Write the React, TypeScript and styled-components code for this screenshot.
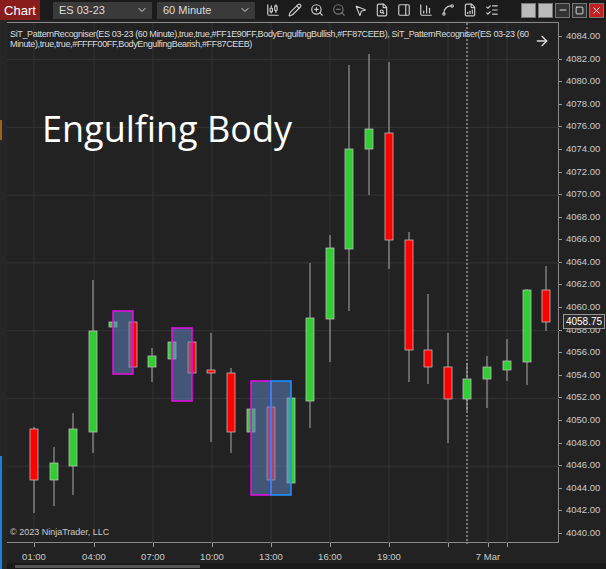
import React from "react";
import styled, { createGlobalStyle } from "styled-components";
import { CandlestickChart, Pencil, ZoomIn, ZoomOut, MousePointer2, FileSearch, PanelRight, BarChart3, Spline, FileBarChart, ListChecks, ChevronDown, Minus, Square, X, ArrowRight } from "lucide-react";

const Global = createGlobalStyle`
  html,body{margin:0;padding:0;background:#222;overflow:hidden;}
  body{font-family:"Liberation Sans",Arial,sans-serif;}
`;

const Page = styled.div`width:606px;height:569px;display:flex;flex-direction:column;background:#222;`;
const Toolbar = styled.div`height:20px;display:flex;align-items:center;background:#1b1b1b;gap:0;`;
const Tab = styled.div`width:40px;height:20px;background:#8a1c1c;color:#fff;font-size:13px;display:flex;align-items:center;justify-content:center;`;
const Select = styled.div<{ $w: number; $ml: number }>`
  width:${p => p.$w}px;margin-left:${p => p.$ml}px;height:17px;background:#3a3a3a;color:#ddd;font-size:11px;
  display:flex;align-items:center;justify-content:space-between;padding:0 4px 0 6px;box-sizing:border-box;`;
const Icons = styled.div`display:flex;gap:8px;margin-left:11px;color:#ccc;align-items:center;`;
const WinBtns = styled.div`display:flex;gap:2px;margin-left:auto;margin-right:2px;`;
const WinBtn = styled.div<{ $bg: string }>`width:13px;height:13px;background:${p => p.$bg};border:1px solid #777;display:flex;align-items:center;justify-content:center;color:#fff;`;
const Main = styled.div`flex:1;display:flex;`;
const LeftStrip = styled.div`width:7px;position:relative;background:#262626;`;
const Mark = styled.div<{ $top: number; $h: number; $c: string }>`position:absolute;left:0;width:2px;top:${p => p.$top}px;height:${p => p.$h}px;background:${p => p.$c};`;
const Chart = styled.div`flex:1;display:flex;flex-direction:column;padding-top:2px;`;
const Panel = styled.div`height:521px;display:flex;`;
const Plot = styled.div`width:552px;position:relative;border:1px solid #8a8a8a;border-left:none;box-sizing:border-box;`;
const Axis = styled.div`flex:1;position:relative;`;
const AxisLabel = styled.div<{ $y: number }>`position:absolute;left:7px;top:${p => p.$y - 6}px;font-size:9.5px;color:#ccc;`;
const Tick = styled.div<{ $y: number }>`position:absolute;left:0;width:3px;top:${p => p.$y}px;height:1px;background:#999;`;
const PriceTag = styled.div`position:absolute;left:4px;top:292px;width:42px;height:15px;background:#2a2a2a;border:1px solid #999;color:#fff;font-size:10px;display:flex;align-items:center;justify-content:center;box-sizing:border-box;`;
const Header = styled.div`position:absolute;left:3px;top:6px;width:530px;font-size:9px;letter-spacing:-0.35px;line-height:10px;color:#ddd;`;
const Title = styled.div`position:absolute;left:35px;top:81px;font-family:"Open Sans",sans-serif;font-size:36px;color:#fff;`;
const Copy = styled.div`position:absolute;left:3px;bottom:5px;font-size:9px;color:#ccc;`;
const Arrow = styled.div`position:absolute;right:8px;top:10px;color:#ddd;`;
const TimeAxis = styled.div`height:20px;position:relative;`;
const TimeLabel = styled.div<{ $x: number }>`position:absolute;top:8px;left:${p => p.$x - 7 - 15}px;width:30px;text-align:center;font-size:9.5px;color:#ccc;`;
const TimeTick = styled.div<{ $x: number }>`position:absolute;top:0;left:${p => p.$x - 7}px;width:1px;height:4px;background:#999;`;
const Scroll = styled.div`height:6px;background:#1a1a1a;position:relative;`;
const Thumb = styled.div`position:absolute;left:8px;width:185px;height:3px;top:2px;background:#555;`;

type C = [number, number, number, number, number, boolean];
const candles: C[] = [
  [34, 428, 479, 426, 512, false], [54, 462, 479, 446, 505, true], [73, 428, 465, 412, 494, true],
  [93, 330, 431, 279, 452, true], [113, 321, 326, 321, 326, true], [133, 321, 366, 321, 366, false],
  [152, 355, 366, 347, 381, true], [172, 341, 358, 341, 358, true], [192, 341, 372, 341, 372, false],
  [211, 369, 372, 332, 441, false], [231, 372, 431, 367, 452, false], [251, 408, 431, 408, 431, true],
  [271, 406, 479, 406, 479, false], [291, 397, 482, 397, 482, true], [310, 317, 400, 262, 427, true],
  [330, 247, 318, 234, 361, true], [349, 148, 248, 64, 310, true], [369, 128, 148, 53, 194, true],
  [389, 132, 239, 61, 268, false], [409, 239, 349, 231, 381, false], [428, 349, 366, 293, 383, false],
  [448, 366, 398, 332, 442, false], [467, 378, 398, 362, 410, true], [487, 366, 378, 355, 407, true],
  [507, 360, 369, 338, 380, true], [527, 289, 361, 288, 384, true], [546, 289, 321, 265, 330, false],
];
const prices = Array.from({ length: 23 }, (_, i) => 4084 - i * 2);
const py = (p: number) => 36 + (4084 - p) * 11.295;
const times: [number, string][] = [[34, "01:00"], [94, "04:00"], [153, "07:00"], [212, "10:00"], [271, "13:00"], [330, "16:00"], [389, "19:00"], [488, "7 Mar"]];
const ticksX = [34, 94, 153, 212, 271, 330, 389, 448, 488, 507];
const boxes = [[113, 310, 133, 373, "#e010e0"], [172, 327, 192, 400, "#e010e0"], [251, 380, 271, 494, "#e010e0"], [271, 380, 291, 494, "#1e90ff"]] as const;

export default function App() {
  return (
    <Page>
      <Global />
      <Toolbar>
        <Tab>Chart</Tab>
        <Select $w={99} $ml={13}>ES 03-23<ChevronDown size={12} /></Select>
        <Select $w={98} $ml={5}>60 Minute<ChevronDown size={12} /></Select>
        <Icons>
          <CandlestickChart size={14} /><Pencil size={14} /><ZoomIn size={14} /><ZoomOut size={14} color="#777" />
          <MousePointer2 size={13} /><FileSearch size={14} /><PanelRight size={14} /><BarChart3 size={14} />
          <Spline size={14} /><FileBarChart size={14} /><ListChecks size={14} />
        </Icons>
        <WinBtns>
          <WinBtn $bg="#bbb" /><WinBtn $bg="#bbb" />
          <WinBtn $bg="#333"><Minus size={10} /></WinBtn><WinBtn $bg="#333"><Square size={9} /></WinBtn>
          <WinBtn $bg="#c02020"><X size={11} /></WinBtn>
        </WinBtns>
      </Toolbar>
      <Main>
        <LeftStrip>
          <Mark $top={100} $h={20} $c="#a06020" />
          <Mark $top={436} $h={113} $c="#1e7fe0" />
        </LeftStrip>
        <Chart>
          <Panel>
            <Plot>
              <svg width="552" height="521" viewBox="7 22 552 521" style={{ display: "block" }}>
                {[4082, 4076, 4070, 4064, 4058, 4052, 4046].map(p => (
                  <line key={p} x1={7} x2={559} y1={py(p)} y2={py(p)} stroke="#333" />
                ))}
                {ticksX.map(x => <line key={x} x1={x} x2={x} y1={22} y2={543} stroke="#333" />)}
                <line x1={467} x2={467} y1={22} y2={543} stroke="#ccc" strokeDasharray="2 2" />
                {candles.map(([x, t, b, h, l, up], i) => (
                  <g key={i}>
                    <line x1={x} x2={x} y1={h} y2={l} stroke="#aaa" />
                    <rect x={x - 4} y={t} width={8} height={Math.max(b - t, 2)} fill={up ? "#32cd32" : "#ff0000"} stroke="#bbb" strokeWidth={0.8} />
                  </g>
                ))}
                {boxes.map(([x1, y1, x2, y2, c], i) => (
                  <rect key={i} x={x1} y={y1} width={x2 - x1} height={y2 - y1} fill="rgba(95,130,190,0.55)" stroke={c} strokeWidth={1.6} />
                ))}
              </svg>
              <Header>SiT_PatternRecogniser(ES 03-23 (60 Minute),true,true,#FF1E90FF,BodyEngulfingBullish,#FF87CEEB), SiT_PatternRecogniser(ES 03-23 (60 Minute),true,true,#FFFF00FF,BodyEngulfingBearish,#FF87CEEB)</Header>
              <Arrow><ArrowRight size={16} /></Arrow>
              <Title>Engulfing Body</Title>
              <Copy>© 2023 NinjaTrader, LLC</Copy>
            </Plot>
            <Axis>
              {prices.map(p => (
                <React.Fragment key={p}>
                  <Tick $y={py(p) - 22} />
                  <AxisLabel $y={py(p) - 22}>{p.toFixed(2)}</AxisLabel>
                </React.Fragment>
              ))}
              <PriceTag>4058.75</PriceTag>
            </Axis>
          </Panel>
          <TimeAxis>
            {ticksX.map(x => <TimeTick key={x} $x={x} />)}
            {times.map(([x, t]) => <TimeLabel key={t} $x={x}>{t}</TimeLabel>)}
          </TimeAxis>
          <Scroll><Thumb /></Scroll>
        </Chart>
      </Main>
    </Page>
  );
}
